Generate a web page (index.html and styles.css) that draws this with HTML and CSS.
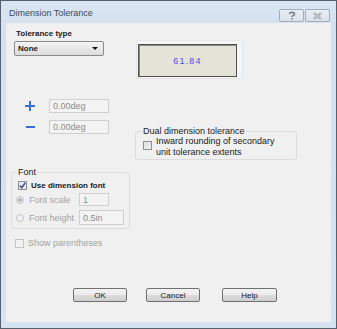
FILE: index.html
```html
<!DOCTYPE html>
<html>
<head>
    <title>Dimension Tolerance</title>
    <link rel="stylesheet" href="styles.css">
</head>
<body>
    <div class="window">
        <div class="titlebar">
            <span class="title">Dimension Tolerance</span>
            <div class="caption-buttons">
                <span class="cap-btn">
                    <svg width="8" height="9" viewBox="0 0 8 9">
                        <path d="M1.5 3 C1.5 0.8 6.5 0.8 6.5 3 C6.5 4.5 4 4.4 4 6" fill="none" stroke="#7b8590" stroke-width="1.6"/>
                        <rect x="3.2" y="7" width="1.6" height="1.6" fill="#7b8590"/>
                    </svg>
                </span>
                <span class="cap-btn">
                    <svg width="9" height="8" viewBox="0 0 9 8">
                        <path d="M1 1 L8 7 M8 1 L1 7" stroke="#8a939c" stroke-width="2.2"/>
                        <path d="M1 1 L8 7 M8 1 L1 7" stroke="#e9edf1" stroke-width="0.8"/>
                    </svg>
                </span>
            </div>
        </div>

        <div class="client">
            <div class="top">
                <div class="type-col">
                    <div class="label bold">Tolerance type</div>
                    <div class="select">
                        <span>None</span>
                        <span class="arrow"></span>
                    </div>
                </div>
                <div class="preview">
                    <div class="preview-inner">61.84</div>
                </div>
            </div>

            <div class="middle">
                <div class="tol-rows">
                    <div class="tol-row">
                        <svg class="sign" width="10" height="10" viewBox="0 0 10 10">
                            <rect x="0" y="4" width="10" height="2" fill="#3a6fd2"/>
                            <rect x="4" y="0" width="2" height="10" fill="#3a6fd2"/>
                        </svg>
                        <div class="field wide">0.00deg</div>
                    </div>
                    <div class="tol-row">
                        <svg class="sign" width="10" height="10" viewBox="0 0 10 10">
                            <rect x="1" y="4" width="9" height="2" fill="#3a6fd2"/>
                        </svg>
                        <div class="field wide">0.00deg</div>
                    </div>
                </div>

                <fieldset class="group dual">
                    <legend>Dual dimension tolerance</legend>
                    <div class="check-row">
                        <span class="check"></span>
                        <span class="check-text">Inward rounding of secondary<br>unit tolerance extents</span>
                    </div>
                </fieldset>
            </div>

            <fieldset class="group font">
                <legend>Font</legend>
                <div class="use-font">
                    <span class="check checked">
                        <svg width="7" height="7" viewBox="0 0 7 7">
                            <path d="M0.8 3.6 L2.8 5.8 L6.3 0.8" fill="none" stroke="#3d4f8f" stroke-width="1.5"/>
                        </svg>
                    </span>
                    <span class="bold">Use dimension font</span>
                </div>
                <div class="font-row">
                    <span class="radio-label"><span class="radio selected"></span>Font scale</span>
                    <div class="field scale">1</div>
                </div>
                <div class="font-row">
                    <span class="radio-label"><span class="radio"></span>Font height</span>
                    <div class="field height">0.5in</div>
                </div>
            </fieldset>

            <div class="parens">
                <span class="check disabled"></span>
                <span class="muted">Show parentheses</span>
            </div>

            <div class="buttons">
                <div class="button">OK</div>
                <div class="button">Cancel</div>
                <div class="button help">Help</div>
            </div>
        </div>
    </div>
</body>
</html>
```

FILE: styles.css
```css
body {
    margin: 0;
    font-family: "Liberation Sans", Arial, sans-serif;
    font-size: 9px;
    color: #1a1a1a;
}
.window {
    width: 337px;
    height: 329px;
    box-sizing: border-box;
    border: 1px solid #56616d;
    background: linear-gradient(#dbe6f3, #d3e0ef 30px, #d6e3f1);
}
.titlebar {
    height: 22px;
    display: flex;
    justify-content: space-between;
    box-sizing: border-box;
    padding: 7px 6px 0 8px;
}
.title {
    font-size: 9px;
    line-height: 11px;
    color: #3b4856;
}
.caption-buttons {
    display: flex;
    gap: 1px;
    margin-top: 1px;
}
.cap-btn {
    width: 23px;
    height: 11px;
    border: 1px solid #9eacbb;
    border-radius: 2px;
    background: linear-gradient(#e8eef5, #d9e2ec);
    display: flex;
    align-items: center;
    justify-content: center;
}
.client {
    margin: 0 5px;
    height: 299px;
    background: #f0f0f0;
    box-sizing: border-box;
    padding-top: 5px;
}
.bold {
    font-weight: bold;
    font-size: 8px;
}
.label {
    line-height: 11px;
    margin-left: 2px;
}
.top {
    display: flex;
    padding-left: 8px;
}
.type-col {
    width: 90px;
}
.select {
    margin-top: 2px;
    height: 15px;
    box-sizing: border-box;
    border: 1px solid #8a8a8a;
    border-radius: 2px;
    background: linear-gradient(#f4f4f4, #e8e8e8 50%, #dcdcdc);
    display: flex;
    justify-content: space-between;
    align-items: center;
    padding: 0 5px 0 3px;
    font-weight: bold;
    font-size: 8px;
}
.arrow {
    width: 0;
    height: 0;
    border-left: 3px solid transparent;
    border-right: 3px solid transparent;
    border-top: 3px solid #111;
}
.preview {
    margin: 12px 0 0 32px;
    width: 107px;
    height: 39px;
    box-sizing: border-box;
    border: 1px solid #e6e6e6;
    border-right-color: #dfe7f0;
    background: #f5f5f5;
    padding: 3px 5px 1px 1px;
}
.preview-inner {
    height: 100%;
    box-sizing: border-box;
    border: 1px solid #4f4f4f;
    box-shadow: inset 1px 1px 0 #8a8a8a;
    background: #e4e3d7;
    color: #4b4cf2;
    font-size: 9px;
    letter-spacing: 1.2px;
    display: flex;
    align-items: center;
    justify-content: center;
}
.middle {
    display: flex;
    align-items: flex-start;
    margin-top: 20px;
}
.tol-rows {
    margin-left: 19px;
    width: 84px;
    display: flex;
    flex-direction: column;
    gap: 7px;
}
.tol-row {
    display: flex;
    align-items: center;
    gap: 14px;
}
.field {
    box-sizing: border-box;
    border: 1px solid #cfcfcf;
    background: #f3f3f3;
    color: #8c8c8c;
    padding-left: 3px;
    display: flex;
    align-items: center;
}
.field.wide {
    width: 60px;
    height: 14px;
}
.group {
    margin: 0;
    border: 1px solid #dcdcdc;
    border-radius: 3px;
    min-width: 0;
}
.group legend {
    padding: 0 1px;
    line-height: 10px;
    color: #1a1a1a;
}
.dual {
    margin: 27px 0 0 26px;
    width: 162px;
    box-sizing: border-box;
    padding: 0 4px 1px 6px;
}
.check-row {
    display: flex;
    align-items: flex-start;
    gap: 4px;
    line-height: 11px;
    margin-left: 1px;
}
.check-row .check {
    margin-top: 5px;
}
.check {
    width: 9px;
    height: 9px;
    flex: none;
    box-sizing: border-box;
    border: 1px solid #8e8f8f;
    background: linear-gradient(135deg, #d6d6d6, #f6f6f6);
    box-shadow: inset 0 0 0 1px #eaeaea;
    display: flex;
    align-items: center;
    justify-content: center;
}
.check.checked {
    background: linear-gradient(135deg, #dfe6f2, #f8fafd);
}
.check.disabled {
    border-color: #c4c4c4;
    background: #f2f2f2;
    box-shadow: none;
}
.font {
    margin: 7px 0 0 5px;
    width: 119px;
    box-sizing: border-box;
    padding: 0 4px 3px 5px;
}
.use-font {
    display: flex;
    align-items: center;
    gap: 4px;
    line-height: 11px;
    margin: 3px 0 0 1px;
}
.font-row {
    display: flex;
    align-items: center;
    margin-top: 2px;
}
.font-row + .font-row {
    margin-top: 4px;
}
.radio-label {
    width: 62px;
    display: flex;
    align-items: center;
    gap: 5px;
    color: #a3a3a3;
}
.radio {
    width: 8px;
    height: 8px;
    box-sizing: border-box;
    border: 1px solid #c2c2c2;
    border-radius: 50%;
    background: #f1f1f1;
    margin-left: -1px;
    display: flex;
    align-items: center;
    justify-content: center;
}
.radio.selected::after {
    content: "";
    width: 4px;
    height: 4px;
    border-radius: 50%;
    background: #b5b5b5;
}
.field.scale {
    width: 30px;
    height: 13px;
}
.field.height {
    width: 45px;
    height: 15px;
}
.parens {
    display: flex;
    align-items: center;
    gap: 4px;
    line-height: 11px;
    margin: 9px 0 0 9px;
}
.muted {
    color: #a3a3a3;
}
.buttons {
    display: flex;
    gap: 19px;
    margin-top: 39px;
    padding-left: 67px;
}
.button {
    width: 54px;
    height: 14px;
    box-sizing: border-box;
    border: 1px solid #707070;
    border-radius: 2px;
    background: linear-gradient(#f3f3f3, #ebebeb 50%, #dddddd 51%, #cfcfcf);
    display: flex;
    align-items: center;
    justify-content: center;
    font-size: 8px;
}
.button.help {
    margin-left: 3px;
    width: 55px;
}
```
